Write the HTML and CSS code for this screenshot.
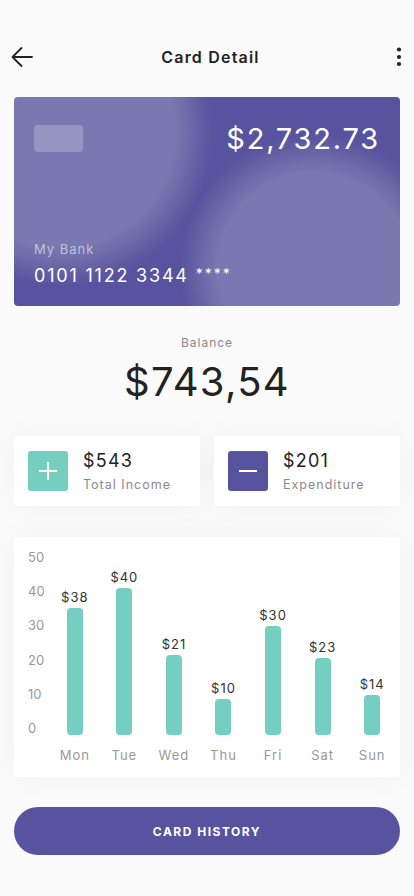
FILE: index.html
```html
<!DOCTYPE html>
<html lang="en">
<head>
  <meta charset="UTF-8" />
  <meta name="viewport" content="width=device-width, initial-scale=1.0" />
  <title>Card Detail</title>
  <link rel="stylesheet" href="styles.css">
</head>
<body>
  <div class="page">
    <header class="topbar">
      <button class="icon-btn" aria-label="Back">
        <svg width="24" height="24" viewBox="0 0 24 24" fill="none" stroke="#222" stroke-width="1.8" stroke-linecap="round" stroke-linejoin="round">
          <path d="M22 12H2.5M11.5 3L2.5 12l9 9"/>
        </svg>
      </button>
      <h1>Card Detail</h1>
      <button class="icon-btn" aria-label="More">
        <svg width="24" height="24" viewBox="0 0 24 24" fill="#222">
          <circle cx="12" cy="4.5" r="2.1"/>
          <circle cx="12" cy="12" r="2.1"/>
          <circle cx="12" cy="19" r="2.1"/>
        </svg>
      </button>
    </header>

    <div class="bank-card">
      <div class="card-top">
        <div class="chip"></div>
        <div class="card-amount">$2,732.73</div>
      </div>
      <div class="card-bottom">
        <div class="bank-name">My Bank</div>
        <div class="card-number">0101 1122 3344 <span class="stars">****</span></div>
      </div>
    </div>

    <div class="balance">
      <div class="balance-label">Balance</div>
      <div class="balance-value">$743,54</div>
    </div>

    <div class="stats">
      <div class="stat">
        <div class="stat-icon income">
          <svg width="20" height="20" viewBox="0 0 20 20" stroke="#fff" stroke-width="2"><path d="M10 1v18M1 10h18"/></svg>
        </div>
        <div>
          <div class="stat-value">$543</div>
          <div class="stat-label">Total Income</div>
        </div>
      </div>
      <div class="stat">
        <div class="stat-icon expense">
          <svg width="20" height="20" viewBox="0 0 20 20" stroke="#fff" stroke-width="2"><path d="M1 10h18"/></svg>
        </div>
        <div>
          <div class="stat-value">$201</div>
          <div class="stat-label">Expenditure</div>
        </div>
      </div>
    </div>

    <div class="chart">
      <div class="y-axis">
        <span>50</span><span>40</span><span>30</span><span>20</span><span>10</span><span>0</span>
      </div>
      <div class="bar-col"><span class="bar-value">$38</span><div class="bar" style="height:127px"></div></div>
      <div class="bar-col"><span class="bar-value">$40</span><div class="bar" style="height:147px"></div></div>
      <div class="bar-col"><span class="bar-value">$21</span><div class="bar" style="height:80px"></div></div>
      <div class="bar-col"><span class="bar-value">$10</span><div class="bar" style="height:36px"></div></div>
      <div class="bar-col"><span class="bar-value">$30</span><div class="bar" style="height:109px"></div></div>
      <div class="bar-col"><span class="bar-value">$23</span><div class="bar" style="height:77px"></div></div>
      <div class="bar-col"><span class="bar-value">$14</span><div class="bar" style="height:40px"></div></div>
      <span class="day first">Mon</span>
      <span class="day">Tue</span>
      <span class="day">Wed</span>
      <span class="day">Thu</span>
      <span class="day">Fri</span>
      <span class="day">Sat</span>
      <span class="day">Sun</span>
    </div>

    <button class="history-btn">CARD HISTORY</button>
  </div>
</body>
</html>
```

FILE: styles.css
```css
* {
  box-sizing: border-box;
}
body {
  margin: 0;
  font-family: Inter, "Noto Sans", sans-serif;
  background-color: #fafafa;
  color: #222;
}
.page {
  padding: 32px 14px 0;
}

/* top bar */
.topbar {
  display: flex;
  align-items: center;
  justify-content: space-between;
  height: 50px;
  margin: 0 -11px 15px -4px;
}
.topbar h1 {
  margin: 0;
  font-size: 16px;
  font-weight: 600;
  letter-spacing: 1.2px;
  color: #222;
}
.icon-btn {
  display: flex;
  width: 24px;
  height: 24px;
  padding: 0;
  border: none;
  background: none;
}

/* bank card */
.bank-card {
  height: 209px;
  padding: 24px 22px 20px 20px;
  border-radius: 4px;
  display: flex;
  flex-direction: column;
  justify-content: space-between;
  color: #fff;
  background-color: #58539e;
  background-image:
    radial-gradient(circle at 45px 35px, #7978b0 0, #7978b0 116px, rgba(121,120,176,0) 154px),
    radial-gradient(circle at 300px 172px, #7978b0 0, #7978b0 96px, rgba(121,120,176,0) 134px);
}
.card-top {
  display: flex;
  justify-content: space-between;
  align-items: center;
}
.chip {
  width: 49px;
  height: 27px;
  border-radius: 4px;
  background: rgba(255,255,255,0.22);
}
.card-amount {
  font-size: 29px;
  letter-spacing: 1.8px;
  margin-right: -2px;
}
.bank-name {
  font-size: 13px;
  letter-spacing: 1px;
  color: rgba(255,255,255,0.55);
  margin-bottom: 8px;
}
.card-number {
  font-size: 18px;
  letter-spacing: 1.8px;
}
.stars {
  font-size: 14px;
  letter-spacing: 2px;
  vertical-align: 3px;
}

/* balance */
.balance {
  text-align: center;
  margin-top: 29px;
}
.balance-label {
  font-size: 12px;
  line-height: 16px;
  letter-spacing: 1px;
  color: #8a8a8a;
}
.balance-value {
  font-size: 40px;
  line-height: 48px;
  margin-top: 7px;
  letter-spacing: 1.3px;
  color: #222;
}

/* income / expenditure */
.stats {
  display: flex;
  gap: 14px;
  margin-top: 30px;
}
.stat {
  flex: 1;
  display: flex;
  align-items: center;
  height: 70px;
  padding: 0 14px;
  background: white;
  border-radius: 4px;
  box-shadow: 0 0 30px rgba(0,0,0,0.04);
}
.stat-icon {
  width: 40px;
  height: 40px;
  border-radius: 3px;
  display: flex;
  align-items: center;
  justify-content: center;
  margin-right: 15px;
}
.income {
  background: #74cfc0;
}
.expense {
  background: #58539e;
}
.stat-value {
  font-size: 18px;
  letter-spacing: 1.2px;
  line-height: 22px;
  color: #222;
}
.stat-label {
  font-size: 12.5px;
  letter-spacing: 1px;
  color: #8a8a8a;
  margin-top: 5px;
}

/* weekly chart */
.chart {
  display: grid;
  grid-template-columns: 22px repeat(7, 1fr);
  grid-template-rows: 185px auto;
  margin-top: 31px;
  padding: 13px 3px 14px 14px;
  background: white;
  border-radius: 4px;
  box-shadow: 0 0 30px rgba(0,0,0,0.04);
}
.y-axis {
  display: flex;
  flex-direction: column;
  justify-content: space-between;
  font-size: 13px;
  line-height: 14px;
  color: #999;
}
.bar-col {
  display: flex;
  flex-direction: column;
  justify-content: flex-end;
  align-items: center;
}
.bar-value {
  font-size: 13px;
  line-height: 14px;
  letter-spacing: 1px;
  color: #333;
  margin-bottom: 4px;
}
.bar {
  width: 16px;
  border-radius: 4px;
  background: #74cfc0;
}
.day {
  text-align: center;
  font-size: 13px;
  line-height: 16px;
  letter-spacing: 1px;
  color: #999;
  margin-top: 12px;
}
.day.first {
  grid-column: 2;
}

/* bottom button */
.history-btn {
  display: block;
  width: 100%;
  height: 48px;
  margin-top: 30px;
  border: none;
  border-radius: 24px;
  background: #58539e;
  color: white;
  font-family: Inter, "Noto Sans", sans-serif;
  font-size: 12px;
  font-weight: 700;
  letter-spacing: 1.5px;
  cursor: pointer;
}
```
